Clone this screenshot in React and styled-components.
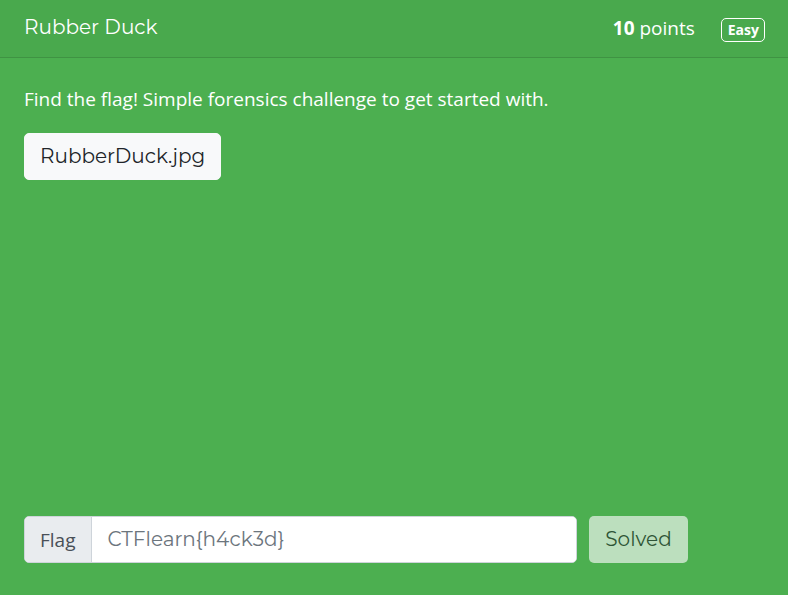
import React from "react";
import styled, { createGlobalStyle } from "styled-components";

const Global = createGlobalStyle`
  *, *::before, *::after { box-sizing: border-box; }
  body {
    margin: 0;
    background: #4caf50;
    color: #fff;
    font-family: "Segoe UI", "Open Sans", "Noto Sans", sans-serif;
    font-size: 19px;
    line-height: 28px;
  }
`;

const display = `"Montserrat", "Inter", sans-serif`;

const Card = styled.main`
  display: flex;
  flex-direction: column;
  min-height: 100vh;
`;

const Header = styled.header`
  display: flex;
  align-items: flex-start;
  justify-content: space-between;
  padding: 14px 23px 15px 24px;
  background: rgba(0, 0, 0, 0.03);
  border-bottom: 1px solid rgba(0, 0, 0, 0.125);
`;

const Title = styled.h1`
  margin: 0;
  font-family: ${display};
  font-size: 20px;
  font-weight: 400;
  line-height: 26px;
`;

const Meta = styled.div`
  display: flex;
  align-items: baseline;
  gap: 26px;
`;

const Badge = styled.span`
  padding: 0 5px 0 6px;
  border: 1px solid #fff;
  border-radius: 5px;
  font-size: 14px;
  font-weight: 700;
  line-height: 22px;
`;

const Body = styled.section`
  flex: 1;
  display: flex;
  flex-direction: column;
  align-items: flex-start;
  padding: 27px 24px 0;
  gap: 20px;
`;

const Description = styled.p`
  margin: 0;
`;

const FileLink = styled.a`
  padding: 9px 15px;
  border: 1px solid #f8f9fa;
  border-radius: 5px;
  background: #f8f9fa;
  color: #212529;
  font-family: ${display};
  font-size: 20px;
  line-height: 27px;
  text-decoration: none;
`;

const FlagForm = styled.form`
  display: flex;
  gap: 12px;
  padding: 0 100px 32px 24px;
`;

const InputGroup = styled.div`
  flex: 1;
  min-width: 0;
  display: flex;
  height: 47px;
  border: 1px solid #ced4da;
  border-radius: 5px;
  overflow: hidden;
  background: #fff;
`;

const FlagLabel = styled.label`
  display: flex;
  align-items: center;
  padding: 0 16px 0 15px;
  border-right: 1px solid #ced4da;
  background: #e9ecef;
  color: #495057;
`;

const FlagInput = styled.input`
  flex: 1;
  min-width: 0;
  padding: 0 15px 2px;
  border: 0;
  outline: 0;
  background: #fff;
  color: #495057;
  font-family: ${display};
  font-size: 20px;
  &::placeholder { color: #6c757d; opacity: 1; }
`;

const SolvedButton = styled.button`
  min-width: 99px;
  height: 47px;
  padding: 0 16px 2px;
  border: 0;
  border-radius: 5px;
  background: #f8f9fa;
  color: #212529;
  font-family: ${display};
  font-size: 20px;
  opacity: 0.65;
`;

export default function App() {
  return (
    <Card>
      <Global />
      <Header>
        <Title>Rubber Duck</Title>
        <Meta>
          <span><strong>10</strong> points</span>
          <Badge>Easy</Badge>
        </Meta>
      </Header>
      <Body>
        <Description>Find the flag! Simple forensics challenge to get started with.</Description>
        <FileLink href="#file" download>RubberDuck.jpg</FileLink>
      </Body>
      <FlagForm>
        <InputGroup>
          <FlagLabel htmlFor="flag">Flag</FlagLabel>
          <FlagInput id="flag" type="text" placeholder="CTFlearn{h4ck3d}" />
        </InputGroup>
        <SolvedButton type="submit" disabled>Solved</SolvedButton>
      </FlagForm>
    </Card>
  );
}
